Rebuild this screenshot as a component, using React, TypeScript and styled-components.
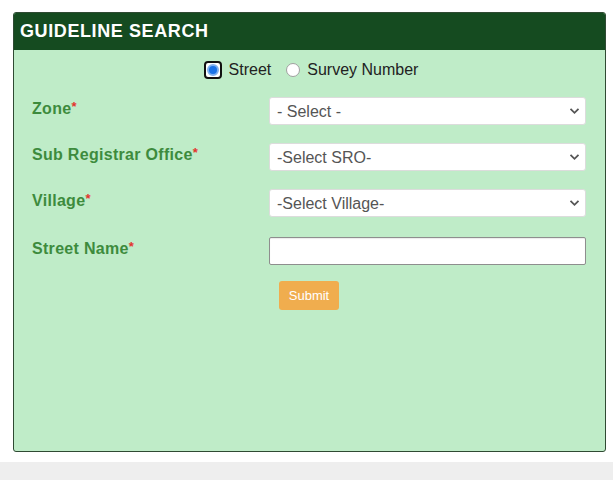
import React from "react";
import styled, { createGlobalStyle } from "styled-components";

const Global = createGlobalStyle`
  html, body { margin: 0; padding: 0; background: #ffffff; }
  body { font-family: "Liberation Sans", Arial, sans-serif; }
  * { box-sizing: border-box; }
`;

const Page = styled.div`
  width: 613px;
  height: 480px;
  display: flex;
  flex-direction: column;
  background: #ffffff;
`;

const Wrap = styled.div`
  padding: 12px 7px 10px 13px;
`;

const Panel = styled.section`
  width: 593px;
  height: 440px;
  border: 1px solid #2f4a33;
  border-radius: 3px;
  background: #bfecc8;
  overflow: hidden;
  display: flex;
  flex-direction: column;
`;

const Header = styled.div`
  height: 37px;
  background: #154b20;
  color: #ffffff;
  font-weight: bold;
  font-size: 18px;
  letter-spacing: 0.6px;
  display: flex;
  align-items: center;
  padding-left: 6px;
`;

const Body = styled.div`
  padding: 9px 19px 0 18px;
  display: flex;
  flex-direction: column;
`;

const RadioRow = styled.div`
  display: flex;
  align-items: center;
  justify-content: center;
  height: 22px;
  font-size: 16px;
  color: #222;
  margin-bottom: 16px;
  padding-left: 4px;
`;

const RadioItem = styled.label<{ $gap?: number }>`
  display: flex;
  align-items: center;
  gap: 7px;
  margin-right: ${(p) => p.$gap ?? 0}px;
`;

const RadioFocus = styled.span`
  width: 18px;
  height: 18px;
  border: 2px solid #111;
  border-radius: 4px;
  display: flex;
  align-items: center;
  justify-content: center;
  background: #ffffff;
`;

const RadioOn = styled.span`
  width: 12px;
  height: 12px;
  border-radius: 50%;
  background: #1a73e8;
  border: 2px solid #7fb1f0;
`;

const RadioOff = styled.span`
  width: 14px;
  height: 14px;
  border-radius: 50%;
  background: #ffffff;
  border: 1px solid #a0a0a0;
  margin-left: 3px;
`;

const FormRow = styled.div<{ $mt?: number }>`
  display: grid;
  grid-template-columns: 237px 317px;
  align-items: start;
  margin-top: ${(p) => p.$mt ?? 0}px;
`;

const Label = styled.div`
  padding-top: 0px;
  font-size: 16px;
  line-height: 19px;
  font-weight: bold;
  color: #3d8b3d;
  letter-spacing: 0.3px;
`;

const Star = styled.span`
  color: #e3342f;
  font-size: 13px;
  vertical-align: 3px;
`;

const SelectBox = styled.div`
  position: relative;
  height: 28px;
`;

const Select = styled.select`
  appearance: none;
  -webkit-appearance: none;
  width: 100%;
  height: 28px;
  border: 1px solid #dcdcdc;
  border-radius: 3px;
  background: #ffffff;
  font-family: "Liberation Sans", Arial, sans-serif;
  font-size: 16px;
  color: #555;
  padding: 0 24px 0 7px;
  outline: none;
`;

const Chevron = styled.svg`
  position: absolute;
  right: 6px;
  top: 10px;
  width: 11px;
  height: 8px;
  pointer-events: none;
`;

const TextInput = styled.input`
  width: 100%;
  height: 28px;
  border: 1px solid #8e8e8e;
  border-radius: 2px;
  background: #ffffff;
  box-shadow: inset 0 1px 1px rgba(0, 0, 0, 0.08);
  outline: none;
  font-size: 16px;
`;

const ButtonCell = styled.div`
  padding-left: 10px;
`;

const Submit = styled.button`
  width: 60px;
  height: 29px;
  border: none;
  border-radius: 3px;
  background: #f0ad4e;
  color: #ffffff;
  font-family: "Liberation Sans", Arial, sans-serif;
  font-size: 13px;
  padding: 0;
`;

const Footer = styled.div`
  height: 18px;
  background: #eeeeee;
`;

const Req: React.FC<{ text: string }> = ({ text }) => (
  <Label>
    {text}
    <Star>*</Star>
  </Label>
);

const Dropdown: React.FC<{ placeholder: string }> = ({ placeholder }) => (
  <SelectBox>
    <Select defaultValue="">
      <option value="">{placeholder}</option>
    </Select>
    <Chevron viewBox="0 0 11 8">
      <path d="M1.5 1.8 L5.5 5.8 L9.5 1.8" fill="none" stroke="#555" strokeWidth="1.8" />
    </Chevron>
  </SelectBox>
);

export default function App() {
  return (
    <Page>
      <Global />
      <Wrap>
        <Panel>
          <Header>GUIDELINE SEARCH</Header>
          <Body>
            <RadioRow>
              <RadioItem $gap={12}>
                <RadioFocus>
                  <RadioOn />
                </RadioFocus>
                Street
              </RadioItem>
              <RadioItem>
                <RadioOff />
                Survey Number
              </RadioItem>
            </RadioRow>
            <FormRow>
              <Req text="Zone" />
              <Dropdown placeholder="- Select -" />
            </FormRow>
            <FormRow $mt={18}>
              <Req text="Sub Registrar Office" />
              <Dropdown placeholder="-Select SRO-" />
            </FormRow>
            <FormRow $mt={18}>
              <Req text="Village" />
              <Dropdown placeholder="-Select Village-" />
            </FormRow>
            <FormRow $mt={20}>
              <Req text="Street Name" />
              <TextInput type="text" />
            </FormRow>
            <FormRow $mt={16}>
              <div />
              <ButtonCell>
                <Submit>Submit</Submit>
              </ButtonCell>
            </FormRow>
          </Body>
        </Panel>
      </Wrap>
      <Footer />
    </Page>
  );
}
